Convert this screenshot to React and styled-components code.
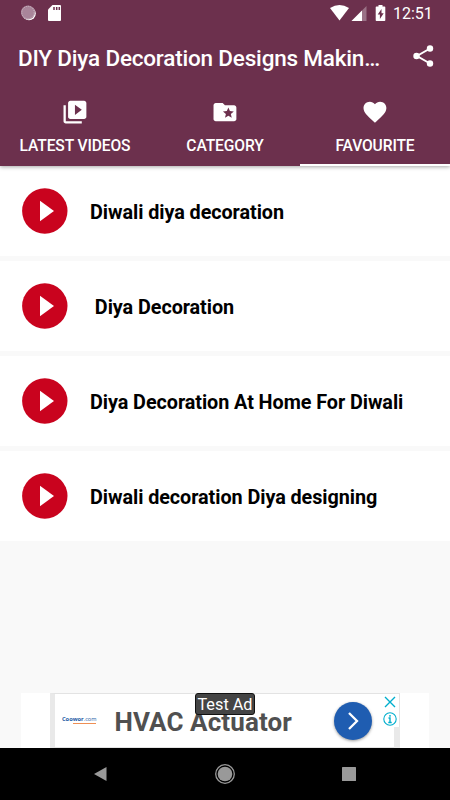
import * as React from "react";
import styled, {createGlobalStyle} from "styled-components";


const GlobalStyle = createGlobalStyle`
    * {
        box-sizing: border-box;
    }

    body {
        margin: 0;
        background-color: #f9f9f9;
        font-family: Roboto, "Liberation Sans", sans-serif;
    }

    svg {
        display: block;
    }
`;

const Screen = styled.div`
    display: flex;
    flex-direction: column;
    width: 450px;
    height: 800px;
    overflow: hidden;
    background-color: #f9f9f9;
`;

const Header = styled.header`
    position: relative;
    z-index: 1;
    height: 166px;
    color: #ffffff;
    background-color: #6c304d;
    box-shadow: 0 1px 4px 0 rgba(0, 0, 0, 0.35);
`;

const StatusBar = styled.div`
    display: flex;
    justify-content: space-between;
    height: 28px;
    padding: 0 18px 0 20px;
`;

const StatusIcons = styled.div`
    display: flex;
`;

const SdCard = styled.svg`
    margin-left: 10px;
`;

const Clock = styled.div`
    width: 39px;
    margin-left: 7px;
    font-size: 16px;
    line-height: 28px;
    white-space: nowrap;
`;

const Toolbar = styled.div`
    display: flex;
    align-items: center;
    justify-content: space-between;
    height: 58px;
    padding: 0 16px 2px 18px;
`;

const Title = styled.h1`
    margin: 0;
    padding-top: 4px;
    font-size: 22.5px;
    font-weight: 500;
    line-height: 30px;
    letter-spacing: -0.19px;
    white-space: nowrap;
`;

const TabBar = styled.nav`
    display: flex;
    height: 80px;
`;

const Tab = styled.div`
    display: flex;
    flex-direction: column;
    align-items: center;
    flex: 1;
    padding-top: 12px;
    border-bottom: 2px solid ${(props) => (props.$active ? "#ffffff" : "transparent")};
`;

const TabLabel = styled.span`
    margin-top: 10px;
    font-size: 15.6px;
    font-weight: 500;
    line-height: 20px;
    letter-spacing: -0.12px;
    white-space: nowrap;
`;

const List = styled.main`
    display: flex;
    flex-direction: column;
    gap: 5px;
    flex: 1;
`;

const Row = styled.div`
    display: flex;
    align-items: center;
    height: 90px;
    padding-left: 22px;
    background-color: #ffffff;
`;

const RowTitle = styled.span`
    margin-left: 22px;
    padding-top: 4px;
    font-size: 19.8px;
    font-weight: 700;
    line-height: 26px;
    letter-spacing: -0.06px;
    color: #000000;
    white-space: pre;
`;

const AdSlot = styled.div`
    display: flex;
    justify-content: center;
    height: 55px;
    margin: 0 21px;
    background-color: #ffffff;
`;

const AdBanner = styled.div`
    position: relative;
    display: flex;
    width: 350px;
    border: 1px solid #e3e3e3;
    border-left: 5px solid #e9e9e9;
`;

const Brand = styled.div`
    width: 34px;
    margin: 21px 0 0 7px;
    font-family: "Open Sans", sans-serif;
    font-size: 5.7px;
    font-weight: 700;
    line-height: 8px;
    color: #1c5ba5;
    white-space: nowrap;

    span {
        font-weight: 400;
    }
`;

const BrandLine = styled.div`
    width: 23px;
    height: 1px;
    margin-left: 11px;
    background-color: #ee8f55;
`;

const AdText = styled.div`
    width: 180px;
    margin: 13px 0 0 18.5px;
    font-size: 26px;
    font-weight: 700;
    line-height: 30px;
    letter-spacing: 0.1px;
    color: #505050;
    white-space: nowrap;
`;

const TestBadge = styled.div`
    position: absolute;
    top: -1px;
    left: 140px;
    width: 60px;
    height: 22px;
    border: 1px solid #111111;
    border-radius: 3px;
    font-size: 16.3px;
    line-height: 22px;
    text-align: center;
    white-space: nowrap;
    color: #ffffff;
    background-color: #444444;
`;

const ArrowButton = styled.div`
    display: flex;
    align-items: center;
    justify-content: center;
    width: 38px;
    height: 38px;
    margin: 8px 0 0 39.5px;
    border-radius: 50%;
    background-color: #1f5db1;
    box-shadow: 0 1px 3px rgba(0, 0, 0, 0.4);
`;

const AdControls = styled.div`
    display: flex;
    flex-direction: column;
    align-items: center;
    width: 15px;
    margin: 2px 0 0 10px;
    gap: 4px;
`;

const AdEdge = styled.div`
    position: absolute;
    right: -1px;
    bottom: -1px;
    width: 6px;
    height: 21px;
    background-color: #e9e9e9;
`;

const NavBar = styled.footer`
    display: flex;
    align-items: center;
    justify-content: space-between;
    height: 52px;
    padding: 0 94px 0 93px;
    background-color: #000000;
`;

const SyncIcon = () => (
    <svg width="18" height="28">
        <circle cx="9" cy="13.5" r="6.8" fill="#ffffff"/>
        <circle cx="8" cy="12.5" r="7" fill="#a9859a"/>
        <circle cx="8" cy="12.5" r="6.2" fill="none" stroke="#cbb7c2" strokeWidth="1" strokeDasharray="1.2 1"/>
    </svg>
);

const SdCardIcon = () => (
    <SdCard width="14" height="28">
        <path d="M4.5 5H12q1 0 1 1V20q0 1-1 1H1q-1 0-1-1V9.5z" fill="#ffffff"/>
        <path d="M6 7v3M8.7 7v3M11.3 7v3" stroke="#6c304d" strokeWidth="1.5"/>
    </SdCard>
);

// Wifi, signal and charging battery
const SystemIcons = () => (
    <svg width="56" height="28">
        <path d="M0 8Q9.5 2 19 8L9.5 20.5z" fill="#ffffff"/>
        <path d="M36.5 6V21H21.5z" fill="#9a7186"/>
        <path d="M32 10.5V21H21.5z" fill="#ffffff"/>
        <path d="M46.5 6.5h2V5h4v1.5h2q.8 0 .8 .8V20.2q0 .8-.8 .8h-8q-.8 0-.8-.8V7.3q0-.8.8-.8z" fill="#ffffff"/>
        <path d="M51.5 9l-3.8 5.5h2.2V19l3.8-5.7h-2.2z" fill="#6c304d"/>
    </svg>
);

const ShareIcon = () => (
    <svg width="22" height="24" viewBox="0 0 22 24">
        <path d="M18 4.5L5 12L18 19.5" fill="none" stroke="#ffffff" strokeWidth="2"/>
        <circle cx="18" cy="4.5" r="3.2" fill="#ffffff"/>
        <circle cx="4.5" cy="12" r="3.2" fill="#ffffff"/>
        <circle cx="18" cy="19.5" r="3.2" fill="#ffffff"/>
    </svg>
);

const TAB_PATHS = {
    videos: "M4 6H2v14c0 1.1.9 2 2 2h14v-2H4V6zm16-4H8c-1.1 0-2 .9-2 2v12c0 1.1.9 2 2 2h12c1.1 0 2-.9 2-2V4c0-1.1-.9-2-2-2zm-8 12.5v-9l6 4.5-6 4.5z",
    category: "M20 6h-8l-2-2H4c-1.1 0-1.99.9-1.99 2L2 18c0 1.1.9 2 2 2h16c1.1 0 2-.9 2-2V8c0-1.1-.9-2-2-2zm-2.06 11L15 15.28 12.06 17l.78-3.33-2.59-2.24 3.41-.29L15 8l1.34 3.14 3.41.29-2.59 2.24.78 3.33z",
    heart: "M12 21.35l-1.45-1.32C5.4 15.36 2 12.28 2 8.5 2 5.42 4.42 3 7.5 3c1.74 0 3.41.81 4.5 2.09C13.09 3.81 14.76 3 16.5 3 19.58 3 22 5.42 22 8.5c0 3.78-3.4 6.86-8.55 11.54L12 21.35z",
};

const TabIcon = ({name}) => (
    <svg width="28" height="28" viewBox="-0.2 -0.3 24.5 24.5">
        <path d={TAB_PATHS[name]} fill="#ffffff"/>
    </svg>
);

const PlayIcon = () => (
    <svg width="46" height="46">
        <circle cx="22.8" cy="23" r="22.7" fill="#c9031e"/>
        <path d="M18 12.7L32 23L18 33.3z" fill="#ffffff"/>
    </svg>
);

const tabs = [
    {label: "LATEST VIDEOS", icon: "videos"},
    {label: "CATEGORY", icon: "category"},
    {label: "FAVOURITE", icon: "heart", active: true},
];

const videos = [
    "Diwali diya decoration",
    " Diya Decoration",
    "Diya Decoration At Home For Diwali",
    "Diwali decoration Diya designing",
];

const Ad = () => (
    <AdSlot>
        <AdBanner>
            <Brand>
                Coowor<span>.com</span>
                <BrandLine/>
            </Brand>
            <AdText>HVAC Actuator</AdText>
            <ArrowButton>
                <svg width="12" height="20">
                    <path d="M2 2L10 10L2 18" fill="none" stroke="#ffffff" strokeWidth="2.3"/>
                </svg>
            </ArrowButton>
            <AdEdge/>
            <AdControls>
                <svg width="12" height="12">
                    <path d="M1 1L11 11M11 1L1 11" stroke="#00aecd" strokeWidth="1.4"/>
                </svg>
                <svg width="14" height="14">
                    <circle cx="7" cy="7" r="6.2" fill="none" stroke="#00aecd" strokeWidth="1.1"/>
                    <path d="M7 3v1.7M5.5 6H7v4.5M5.3 10.5h3.4" fill="none" stroke="#00aecd" strokeWidth="1.4"/>
                </svg>
            </AdControls>
            <TestBadge>Test Ad</TestBadge>
        </AdBanner>
    </AdSlot>
);

const App = () => {
    return (
        <Screen>
            <GlobalStyle/>
            <Header>
                <StatusBar>
                    <StatusIcons>
                        <SyncIcon/>
                        <SdCardIcon/>
                    </StatusIcons>
                    <StatusIcons>
                        <SystemIcons/>
                        <Clock>12:51</Clock>
                    </StatusIcons>
                </StatusBar>
                <Toolbar>
                    <Title>DIY Diya Decoration Designs Makin…</Title>
                    <ShareIcon/>
                </Toolbar>
                <TabBar>
                    {tabs.map((tab) => (
                        <Tab key={tab.label} $active={tab.active}>
                            <TabIcon name={tab.icon}/>
                            <TabLabel>{tab.label}</TabLabel>
                        </Tab>
                    ))}
                </TabBar>
            </Header>
            <List>
                {videos.map((video) => (
                    <Row key={video}>
                        <PlayIcon/>
                        <RowTitle>{video}</RowTitle>
                    </Row>
                ))}
            </List>
            <Ad/>
            <NavBar>
                <svg width="14" height="16">
                    <path d="M13.5 1V15L1 8z" fill="#999999"/>
                </svg>
                <svg width="22" height="22">
                    <circle cx="11" cy="11" r="9.3" fill="none" stroke="#999999" strokeWidth="1.3"/>
                    <circle cx="11" cy="11" r="7.3" fill="#999999"/>
                </svg>
                <svg width="14" height="14">
                    <rect width="14" height="14" rx="0.5" fill="#999999"/>
                </svg>
            </NavBar>
        </Screen>
    );
}

export default App;
